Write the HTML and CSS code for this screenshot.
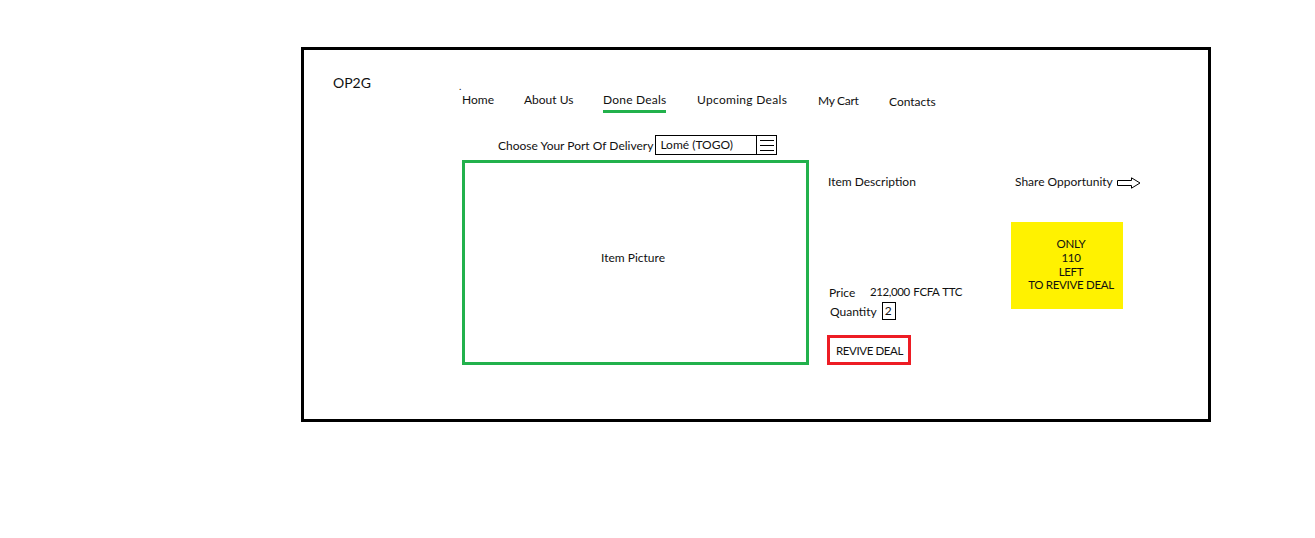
FILE: index.html
```html
<!DOCTYPE html>
<html lang="en">
<head>
<meta charset="utf-8">
<title>OP2G - Done Deals</title>
<link rel="stylesheet" href="styles.css">
</head>
<body>
<div class="frame">
  <header class="top">
    <div class="logo">OP2G</div>
    <nav class="nav">
      <span class="dot">.</span>
      <a class="nav-item w-home"><span class="nav-text">Home</span></a>
      <a class="nav-item w-about"><span class="nav-text">About Us</span></a>
      <a class="nav-item w-done active"><span class="nav-text">Done Deals</span></a>
      <a class="nav-item w-up"><span class="nav-text">Upcoming Deals</span></a>
      <a class="nav-item w-cart low1"><span class="nav-text">My Cart</span></a>
      <a class="nav-item low2"><span class="nav-text">Contacts</span></a>
    </nav>
  </header>

  <div class="port">
    <span class="port-label">Choose Your Port Of Delivery</span>
    <div class="select">
      <span class="select-value">Lomé (TOGO)</span>
      <span class="select-btn">
        <svg width="16" height="14" viewBox="0 0 16 14"><path d="M1 2.5H15M1 7.5H15M1 12.5H15" stroke="#000" stroke-width="1"/></svg>
      </span>
    </div>
  </div>

  <main class="deal">
    <div class="picture">Item Picture</div>
    <div class="info">
      <div class="desc">Item Description</div>
      <div class="buy">
        <div class="price"><span class="price-label">Price</span><span class="price-value">212,000 FCFA TTC</span></div>
        <div class="qty"><span>Quantity</span><span class="qty-box">2</span></div>
        <button class="revive">REVIVE DEAL</button>
      </div>
    </div>
    <aside class="share">
      <div class="share-link">Share Opportunity
        <svg class="arrow" width="24" height="12" viewBox="0 0 24 12"><path d="M0.5 3.5H14.5V0.8L23 6L14.5 11.2V8.5H0.5Z" fill="#fff" stroke="#000" stroke-width="1"/></svg>
      </div>
      <div class="badge">ONLY<br>110<br>LEFT<br>TO REVIVE DEAL</div>
    </aside>
  </main>
</div>
</body>
</html>
```

FILE: styles.css
```css
* { box-sizing: border-box; }
html, body { margin: 0; padding: 0; background: #fff; }
body {
  font-family: Lato, "Open Sans", sans-serif;
  font-size: 12px;
  color: #111;
}
.frame {
  margin: 47px 0 0 301px;
  width: 910px;
  height: 375px;
  border: 3px solid #000;
  padding: 0 0 0 29px;
}
.top {
  display: flex;
  align-items: flex-start;
}
.logo {
  width: 129px;
  margin-top: 24px;
  font-size: 14px;
  line-height: 17px;
}
.nav {
  display: flex;
  margin-top: 42px;
  position: relative;
  line-height: 15px;
}
.dot {
  position: absolute;
  left: -3px;
  top: -13px;
  font-size: 10px;
}
.nav-item { display: block; }
.w-home { width: 62px; }
.w-about { width: 79px; }
.w-done { width: 94px; }
.w-up { width: 121px; }
.w-cart { width: 71px; }
.nav-text {
  display: inline-block;
  padding-bottom: 3px;
  border-bottom: 3px solid transparent;
}
.active .nav-text { border-bottom-color: #22b14c; letter-spacing: 0.2px; }
.w-up .nav-text { letter-spacing: 0.3px; }
.w-cart .nav-text { letter-spacing: -0.3px; }
.low1 { margin-top: 1px; }
.low2 { margin-top: 2px; }

.port {
  display: flex;
  align-items: center;
  margin: 20px 0 0 165px;
  height: 20px;
}
.port-label { margin-right: 2px; }
.select {
  display: flex;
  width: 122px;
  height: 20px;
  border: 1px solid #000;
}
.select-value {
  flex: 1;
  padding-left: 4px;
  line-height: 18px;
  border-right: 1px solid #000;
}
.select-btn {
  width: 19px;
  display: flex;
  align-items: center;
  justify-content: center;
}

.deal {
  display: flex;
  align-items: flex-start;
  margin: 5px 0 0 129px;
}
.picture {
  flex: none;
  width: 347px;
  height: 205px;
  border: 3px solid #22b14c;
  display: flex;
  align-items: center;
  justify-content: center;
  padding-right: 5px;
  padding-bottom: 10px;
}
.info {
  width: 187px;
  height: 205px;
  margin-left: 19px;
  display: flex;
  flex-direction: column;
  justify-content: space-between;
  padding-top: 14px;
}
.buy { display: flex; flex-direction: column; align-items: flex-start; }
.price { display: flex; margin-left: 1px; }
.price-label { width: 41px; }
.price-value { font-size: 11.5px; letter-spacing: -0.4px; word-spacing: 1px; }
.qty { display: flex; align-items: center; margin: 2px 0 0 2px; }
.qty-box {
  margin-left: 5px;
  width: 14px;
  height: 18px;
  border: 1px solid #000;
  padding-left: 2px;
  line-height: 16px;
}
.revive {
  margin-top: 15px;
  margin-left: -1px;
  width: 84px;
  height: 30px;
  border: 3px solid #ed1c24;
  background: #fff;
  font-family: inherit;
  font-size: 11.5px;
  color: #111;
  padding: 0 0 0 6px;
  text-align: left;
  white-space: nowrap;
  letter-spacing: -0.4px;
}
.share {
  display: flex;
  flex-direction: column;
  align-items: flex-start;
  padding-top: 14px;
}
.share-link {
  display: flex;
  align-items: center;
  gap: 4px;
}
.arrow { margin-top: 2px; }
.badge {
  margin: 33px 0 0 -4px;
  width: 112px;
  height: 87px;
  background: #fff200;
  display: flex;
  align-items: center;
  justify-content: center;
  text-align: center;
  line-height: 13.7px;
  font-size: 11.5px;
  letter-spacing: -0.3px;
  padding: 0 0 2px 8px;
}
```
